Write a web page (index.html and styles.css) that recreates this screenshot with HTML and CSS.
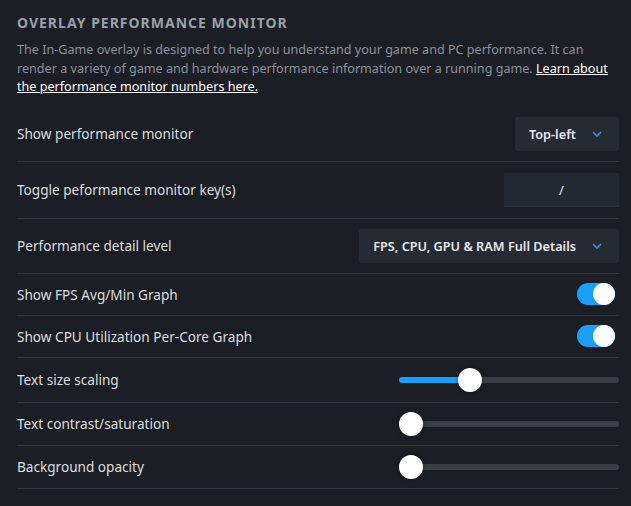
FILE: index.html
```html
<!DOCTYPE html>
<html lang="en">
<head>
  <meta charset="UTF-8">
  <meta name="viewport" content="width=device-width, initial-scale=1.0">
  <title>Overlay Performance Monitor</title>
  <link rel="stylesheet" href="styles.css">
</head>
<body>

<div class="section">
  <h2 class="section-title">Overlay Performance Monitor</h2>
  <p class="section-desc">The In-Game overlay is designed to help you understand your game and PC performance. It can render a variety of game and hardware performance information over a running game. <a href="#">Learn about the performance monitor numbers here.</a></p>

  <div class="row">
    <span class="row-label">Show performance monitor</span>
    <button class="dropdown">Top-left
      <svg class="chevron" width="10" height="6" viewBox="0 0 10 6"><polyline points="1,1 5,5 9,1" fill="none" stroke="#3f8fd6" stroke-width="1.6"/></svg>
    </button>
  </div>

  <div class="row row-key">
    <span class="row-label">Toggle peformance monitor key(s)</span>
    <div class="keybox">/</div>
  </div>

  <div class="row">
    <span class="row-label">Performance detail level</span>
    <button class="dropdown">FPS, CPU, GPU &amp; RAM Full Details
      <svg class="chevron" width="10" height="6" viewBox="0 0 10 6"><polyline points="1,1 5,5 9,1" fill="none" stroke="#3f8fd6" stroke-width="1.6"/></svg>
    </button>
  </div>

  <div class="row row-small">
    <span class="row-label">Show FPS Avg/Min Graph</span>
    <div class="toggle on"><div class="toggle-knob"></div></div>
  </div>

  <div class="row row-small">
    <span class="row-label">Show CPU Utilization Per-Core Graph</span>
    <div class="toggle on"><div class="toggle-knob"></div></div>
  </div>

  <div class="row row-slider">
    <span class="row-label">Text size scaling</span>
    <div class="slider">
      <div class="slider-track"></div>
      <div class="slider-fill" style="width: 71px"></div>
      <div class="slider-knob" style="left: 59px"></div>
    </div>
  </div>

  <div class="row row-slider row-tight">
    <span class="row-label">Text contrast/saturation</span>
    <div class="slider">
      <div class="slider-track"></div>
      <div class="slider-knob" style="left: 0px"></div>
    </div>
  </div>

  <div class="row row-slider row-tight">
    <span class="row-label">Background opacity</span>
    <div class="slider">
      <div class="slider-track"></div>
      <div class="slider-knob" style="left: 0px"></div>
    </div>
  </div>
</div>

</body>
</html>
```

FILE: styles.css
```css
body {
  margin: 0;
  background-color: #1b1e25;
  font-family: "Noto Sans", Arial, sans-serif;
  color: #dcdedf;
}
.section {
  padding: 12px 12px 0 17px;
}
.section-title {
  margin: 0 0 8px 0;
  font-size: 14px;
  font-weight: bold;
  text-transform: uppercase;
  letter-spacing: 1px;
  color: #9aa0a8;
  line-height: 21px;
}
.section-desc {
  margin: 0 0 10px 0;
  font-size: 12.6px;
  line-height: 18.5px;
  color: #8b929a;
}
.section-desc a {
  color: #ffffff;
  text-decoration: underline;
}
.row {
  display: flex;
  align-items: center;
  justify-content: space-between;
  padding: 10px 0;
  border-bottom: 1px solid #2f343c;
  height: 34px;
}
.row-key {
  padding: 11px 0;
}
.row-small {
  height: 21px;
}
.row-slider {
  height: 24px;
}
.row-tight {
  padding: 9px 0;
  height: 24px;
}
.row-label {
  font-size: 13.6px;
  color: #dcdedf;
}
.dropdown {
  display: flex;
  align-items: center;
  gap: 16px;
  height: 34px;
  padding: 0 17px 0 14px;
  background-color: #262b33;
  border: none;
  border-radius: 3px;
  font-family: inherit;
  font-size: 12.7px;
  font-weight: 600;
  color: #e6e8ea;
}
.chevron {
  display: block;
}
.keybox {
  width: 115px;
  height: 34px;
  line-height: 34px;
  text-align: center;
  background-color: #242830;
  border-bottom: 1px solid #2f343c;
  box-sizing: border-box;
  font-size: 13px;
  color: #e6e8ea;
}
.toggle {
  width: 38px;
  height: 22px;
  border-radius: 11px;
  background-color: #1a9fff;
  margin-right: 4px;
  display: flex;
  justify-content: flex-end;
}
.toggle-knob {
  width: 22px;
  height: 22px;
  border-radius: 50%;
  background-color: #ffffff;
}
.slider {
  position: relative;
  width: 220px;
  height: 24px;
}
.slider-track {
  position: absolute;
  left: 0;
  right: 0;
  top: 9px;
  height: 6px;
  border-radius: 3px;
  background-color: #3a3f47;
}
.slider-fill {
  position: absolute;
  left: 0;
  top: 9px;
  height: 6px;
  border-radius: 3px;
  background-color: #1a9fff;
}
.slider-knob {
  position: absolute;
  top: 0;
  width: 24px;
  height: 24px;
  border-radius: 50%;
  background-color: #ffffff;
  box-shadow: 0 0 4px rgba(0, 0, 0, 0.4);
}
```
